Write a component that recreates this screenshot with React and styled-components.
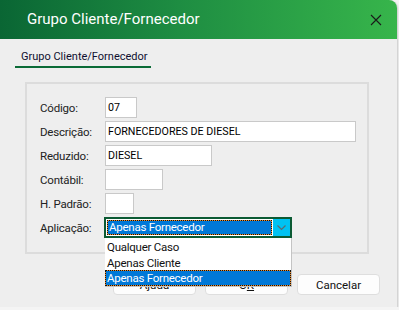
import styled, { createGlobalStyle } from "styled-components"

const GlobalStyle = createGlobalStyle`
    body {
        margin: 0;
        background-color: #f4f4f4;
        font-family: Roboto, "Noto Sans", sans-serif;
    }
`

const dark = "#0b6b37"

const Window = styled.div`
    width: 397px;
    height: 307px;
    background-color: #eeeeee;
    border-top-right-radius: 8px;
    box-shadow: 1px 1px 2px rgba(0, 0, 0, 0.18);
    overflow: hidden;
    display: flex;
    flex-direction: column;
`
const TitleBar = styled.div`
    height: 39px;
    flex-shrink: 0;
    background: linear-gradient(90deg, #0a6634 0%, #1e8d42 45%, #37b54b 100%);
    display: flex;
    align-items: center;
    justify-content: space-between;
    padding: 0 15px 0 27px;
`
const Title = styled.div`
    color: #ffffff;
    font-size: 15px;
    padding-bottom: 1px;
`
const Close = styled.svg`
    width: 12px;
    height: 12px;
`
const Body = styled.div`
    flex: 1;
    display: flex;
    flex-direction: column;
    padding: 0 17px 0 15px;
`
const TabBar = styled.div`
    display: flex;
    margin-top: 10px;
`
const Tab = styled.div`
    font-size: 11px;
    line-height: 16px;
    color: #101030;
    padding: 0 7px 1px 6px;
    width: 123px;
    border-bottom: 2px solid ${dark};
    white-space: nowrap;
`
const Group = styled.div`
    margin: 14px 0 0 10px;
    width: 344px;
    height: 172px;
    box-sizing: border-box;
    border: 2px solid #dcdcdc;
    padding: 13px 0 0 13px;
`
const Form = styled.div`
    display: grid;
    grid-template-columns: 65px auto;
    grid-auto-rows: 21px;
    row-gap: 3px;
    align-items: center;
    justify-items: start;
`
const Label = styled.div`
    font-size: 11.5px;
    color: #222;
    letter-spacing: -0.2px;
`
const Input = styled.div`
    width: ${props => props.w}px;
    height: 21px;
    box-sizing: border-box;
    background-color: #ffffff;
    border: 1px solid #c9c9c9;
    font-size: 10.7px;
    color: #000;
    padding: 0 2px;
    line-height: 19px;
    white-space: nowrap;
`
const ComboWrap = styled.div`
    position: relative;
    margin-left: -1px;
`
const Combo = styled.div`
    width: 188px;
    height: 21px;
    box-sizing: border-box;
    border: 2px solid #0b5a33;
    display: flex;
    background-color: #ffffff;
`
const ComboValue = styled.div`
    flex: 1;
    margin: 1px;
    border: 1px dotted #111;
    background: linear-gradient(#0078d7, #0078d7) padding-box, #f08a24 border-box;
    color: #ffffff;
    font-size: 11.5px;
    letter-spacing: -0.25px;
    line-height: 13px;
    padding-left: 1px;
    white-space: nowrap;
    overflow: hidden;
`
const ComboButton = styled.div`
    width: 17px;
    background-color: #00c2f2;
    display: flex;
    align-items: center;
    justify-content: center;
`
const List = styled.div`
    position: absolute;
    left: 1px;
    top: 21px;
    width: 186px;
    background-color: #ffffff;
    border-right: 1px solid #c4c4c4;
    border-bottom: 1px solid #c4c4c4;
    padding-top: 1px;
    z-index: 2;
`
const Item = styled.div`
    height: 15.5px;
    box-sizing: border-box;
    font-size: 11.5px;
    letter-spacing: -0.25px;
    line-height: 14px;
    padding-left: 1px;
    color: ${props => props.selected ? "#ffffff" : "#111"};
    border: 1px dotted ${props => props.selected ? "#111" : "transparent"};
    background: ${props => props.selected
        ? "linear-gradient(#0078d7, #0078d7) padding-box, #f08a24 border-box"
        : "transparent"};
    white-space: nowrap;
`
const Buttons = styled.div`
    display: flex;
    justify-content: flex-end;
    gap: 9px;
    margin-top: 20px;
`
const Button = styled.div`
    width: 83px;
    height: 21px;
    box-sizing: border-box;
    background-color: #fdfdfd;
    border: 1px solid #dedede;
    border-radius: 4px;
    font-size: 11.5px;
    color: #111;
    display: flex;
    align-items: center;
    justify-content: center;
`

const App = () => {
    return (
        <>
            <GlobalStyle />
            <Window>
                <TitleBar>
                    <Title>Grupo Cliente/Fornecedor</Title>
                    <Close viewBox="0 0 12 12">
                        <path d="M1 1 L11 11 M11 1 L1 11" stroke="#1a1a1a" strokeWidth="1.1" />
                    </Close>
                </TitleBar>
                <Body>
                    <TabBar>
                        <Tab>Grupo Cliente/Fornecedor</Tab>
                    </TabBar>
                    <Group>
                        <Form>
                            <Label>Código:</Label>
                            <Input w={32}>07</Input>
                            <Label>Descrição:</Label>
                            <Input w={251}>FORNECEDORES DE DIESEL</Input>
                            <Label>Reduzido:</Label>
                            <Input w={107}>DIESEL</Input>
                            <Label>Contábil:</Label>
                            <Input w={58}></Input>
                            <Label>H. Padrão:</Label>
                            <Input w={29}></Input>
                            <Label>Aplicação:</Label>
                            <ComboWrap>
                                <Combo>
                                    <ComboValue>Apenas Fornecedor</ComboValue>
                                    <ComboButton>
                                        <svg width="9" height="6" viewBox="0 0 9 6">
                                            <path d="M0.5 0.5 L4.5 4.5 L8.5 0.5" stroke="#5a6a72" strokeWidth="1.2" fill="none" />
                                        </svg>
                                    </ComboButton>
                                </Combo>
                                <List>
                                    <Item>Qualquer Caso</Item>
                                    <Item>Apenas Cliente</Item>
                                    <Item selected>Apenas Fornecedor</Item>
                                </List>
                            </ComboWrap>
                        </Form>
                    </Group>
                    <Buttons>
                        <Button>Ajuda</Button>
                        <Button><span>O<u>K</u></span></Button>
                        <Button>Cancelar</Button>
                    </Buttons>
                </Body>
            </Window>
        </>
    )
}

export default App
